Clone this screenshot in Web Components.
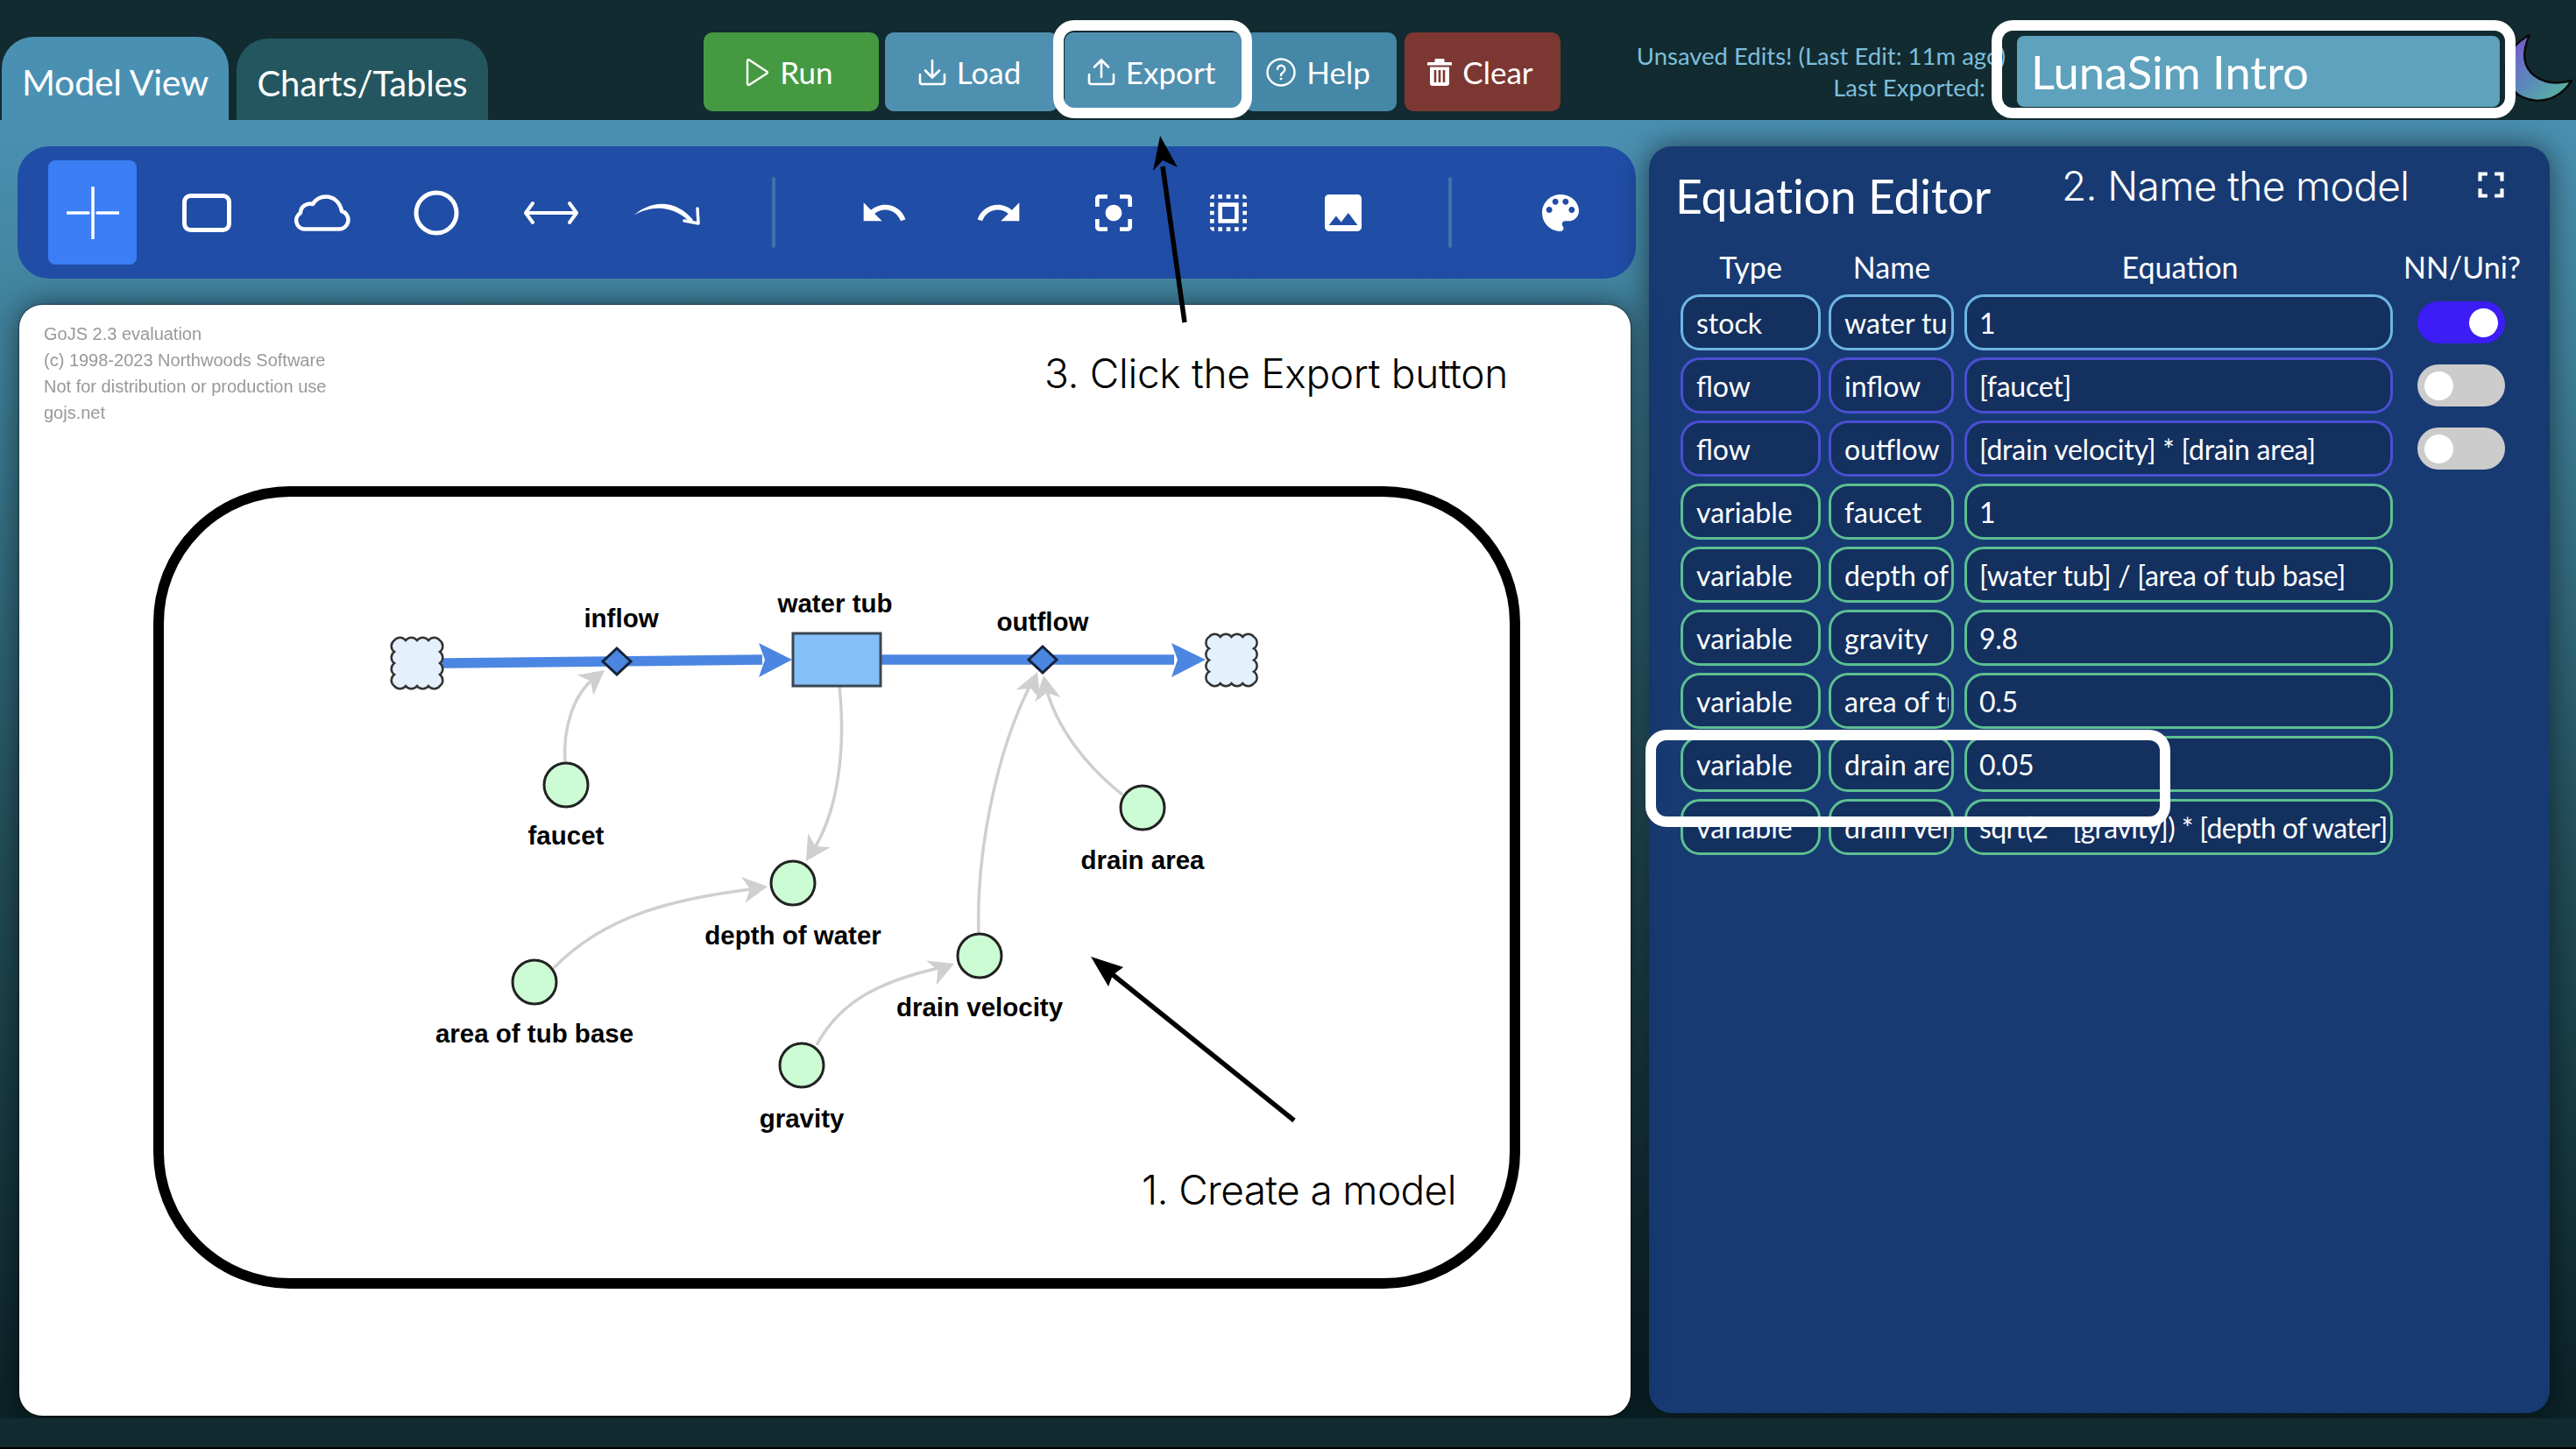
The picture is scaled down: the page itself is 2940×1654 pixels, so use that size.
<!DOCTYPE html>
<html lang="en">
<head>
<meta charset="utf-8">
<title>LunaSim</title>
<style>
  html, body { margin: 0; padding: 0; background: #122b30; }
  body { font-family: Lato, "Noto Sans", sans-serif; color: #fff; }
</style>
</head>
<body>
<luna-app>
  <luna-header>
    <luna-tab active style="--w:259px;--fs:41px;--top:42px;--ls:-.2px">Model View</luna-tab>
    <luna-tab style="--w:287px;--fs:40px;--top:44px;--ls:-.2px;margin-left:9px">Charts/Tables</luna-tab>
    <luna-btn style="--w:200px;--bg:#459a41;margin-left:246px" icon="play">Run</luna-btn>
    <luna-btn style="--w:198px;--bg:#4f90b0;margin-left:7px" icon="load">Load</luna-btn>
    <luna-btn style="--w:203px;--bg:#4f90b0;margin-left:7px" icon="export">Export</luna-btn>
    <luna-btn style="--w:174px;--bg:#4487a6;margin-left:2px" icon="help">Help</luna-btn>
    <luna-btn style="--w:178px;--bg:#7d3732;margin-left:9px" icon="trash">Clear</luna-btn>
    <luna-status></luna-status>
    <luna-name>LunaSim Intro</luna-name>
    <luna-moon></luna-moon>
  </luna-header>
  <luna-main>
    <luna-left>
      <luna-toolbar>
        <tool-btn active icon="plus"></tool-btn>
        <tool-btn icon="rect"></tool-btn>
        <tool-btn icon="cloud"></tool-btn>
        <tool-btn icon="circle"></tool-btn>
        <tool-btn icon="dbl"></tool-btn>
        <tool-btn icon="curve"></tool-btn>
        <tool-sep></tool-sep>
        <tool-btn icon="undo"></tool-btn>
        <tool-btn icon="redo"></tool-btn>
        <tool-btn icon="focus"></tool-btn>
        <tool-btn icon="select"></tool-btn>
        <tool-btn icon="photo"></tool-btn>
        <tool-sep></tool-sep>
        <tool-btn icon="palette"></tool-btn>
      </luna-toolbar>
      <luna-canvas></luna-canvas>
    </luna-left>
    <eq-editor>
      <eq-row type="stock" name="water tub" eq="1" tone="#6db6e4" toggle="on"></eq-row>
      <eq-row type="flow" name="inflow" eq="[faucet]" tone="#4a4fd2" toggle="off"></eq-row>
      <eq-row type="flow" name="outflow" eq="[drain velocity] * [drain area]" tone="#4a4fd2" toggle="off"></eq-row>
      <eq-row type="variable" name="faucet" eq="1" tone="#5cc091"></eq-row>
      <eq-row type="variable" name="depth of water" eq="[water tub] / [area of tub base]" tone="#5cc091"></eq-row>
      <eq-row type="variable" name="gravity" eq="9.8" tone="#5cc091"></eq-row>
      <eq-row type="variable" name="area of tub base" eq="0.5" tone="#5cc091"></eq-row>
      <eq-row type="variable" name="drain area" eq="0.05" tone="#5cc091"></eq-row>
      <eq-row type="variable" name="drain velocity" eq="sqrt(2 * [gravity]) * [depth of water]" tone="#5cc091" style="--eqls:-.62px"></eq-row>
    </eq-editor>
  </luna-main>
  <luna-foot></luna-foot>
  <note-box style="left:1202px;top:23px;width:227px;height:112px"></note-box>
  <note-box style="left:2273px;top:23px;width:598px;height:112px"></note-box>
  <note-box style="left:1878px;top:833px;width:599px;height:111px"></note-box>
  <note-arrows></note-arrows>
  <note-text style="left:1192px;top:396px;--ls:-.3px">3. Click the Export button</note-text>
  <note-text style="left:2353px;top:182px;--ls:-.62px;--c:#fff">2. Name the model</note-text>
  <note-text style="left:1303px;top:1328px;--ls:-.62px">1. Create a model</note-text>
</luna-app>

<script>
const def = (name, css, html, init) => {
  customElements.define(name, class extends HTMLElement {
    connectedCallback() {
      if (this.shadowRoot) return;
      const r = this.attachShadow({ mode: 'open' });
      r.innerHTML = `<style>${css}</style>` + (typeof html === 'function' ? html(this) : html);
      if (init) init(this, r);
    }
  });
};

const MAT = {
  undo: 'M12.5 8c-2.65 0-5.05.99-6.9 2.6L2 7v9h9l-3.62-3.62c1.39-1.16 3.16-1.88 5.12-1.88 3.54 0 6.55 2.31 7.6 5.5l2.37-.78C21.08 11.03 17.15 8 12.5 8z',
  redo: 'M18.4 10.6C16.55 8.99 14.15 8 11.5 8c-4.65 0-8.58 3.03-9.96 7.22L3.9 16c1.05-3.19 4.05-5.5 7.6-5.5 1.95 0 3.73.72 5.12 1.88L13 16h9V7l-3.6 3.6z',
  focus: 'M12 8c-2.21 0-4 1.79-4 4s1.79 4 4 4 4-1.79 4-4-1.79-4-4-4zm-7 7H3v4c0 1.1.9 2 2 2h4v-2H5v-4zM5 5h4V3H5c-1.1 0-2 .9-2 2v4h2V5zm14-2h-4v2h4v4h2V5c0-1.1-.9-2-2-2zm0 16h-4v2h4c1.1 0 2-.9 2-2v-4h-2v4z',
  select: 'M3 5h2V3c-1.1 0-2 .9-2 2zm0 8h2v-2H3v2zm4 8h2v-2H7v2zM3 9h2V7H3v2zm10-6h-2v2h2V3zm6 0v2h2c0-1.1-.9-2-2-2zM5 21v-2H3c0 1.1.9 2 2 2zm-2-4h2v-2H3v2zM9 3H7v2h2V3zm2 18h2v-2h-2v2zm8-8h2v-2h-2v2zm0 8c1.1 0 2-.9 2-2h-2v2zm0-12h2V7h-2v2zm0 8h2v-2h-2v2zm-4 4h2v-2h-2v2zm0-16h2V3h-2v2zM7 17h10V7H7v10zm2-8h6v6H9V9z',
  photo: 'M21 19V5c0-1.1-.9-2-2-2H5c-1.1 0-2 .9-2 2v14c0 1.1.9 2 2 2h14c1.1 0 2-.9 2-2zM8.5 13.5l2.5 3.01L14.5 12l4.5 6H5l3.5-4.5z',
  palette: 'M12 3c-4.97 0-9 4.03-9 9s4.03 9 9 9c.83 0 1.5-.67 1.5-1.5 0-.39-.15-.74-.39-1.01-.23-.26-.38-.61-.38-.99 0-.83.67-1.5 1.5-1.5H16c2.76 0 5-2.24 5-5 0-4.42-4.03-8-9-8zm-5.5 9c-.83 0-1.5-.67-1.5-1.5S5.67 9 6.5 9 8 9.67 8 10.5 7.33 12 6.5 12zm3-4C8.67 8 8 7.33 8 6.5S8.67 5 9.5 5s1.5.67 1.5 1.5S10.33 8 9.5 8zm5 0c-.83 0-1.5-.67-1.5-1.5S13.67 5 14.5 5s1.5.67 1.5 1.5S15.33 8 14.5 8zm3 4c-.83 0-1.5-.67-1.5-1.5S16.67 9 17.5 9s1.5.67 1.5 1.5-.67 1.5-1.5 1.5z',
  full: 'M7 14H5v5h5v-2H7v-3zm-2-4h2V7h3V5H5v5zm12 7h-3v2h5v-5h-2v3zM14 5v2h3v3h2V5h-5z'
};
const mat = (k, s = 56) => `<svg width="${s}" height="${s}" viewBox="0 0 24 24" fill="#fff"><path d="${MAT[k]}"/></svg>`;

const TOP_ICONS = {
  play: `<svg width="28" height="33" viewBox="0 0 28 33" fill="none" stroke="#fff" stroke-width="2.4" stroke-linejoin="round"><path d="M3 4c0-2 1.2-2.4 2.6-1.3L25 15.5c1.2.9 1.2 1.6 0 2.5L5.6 30.6C4.2 31.6 3 31 3 29z"/></svg>`,
  load: `<svg width="32" height="31" viewBox="0 0 32 31" fill="none" stroke="#fff" stroke-width="2.6" stroke-linecap="round" stroke-linejoin="round"><path d="M16 2v19M8 13.500l8 8 8-8M2 18v8.500c0 1.500 1 2.500 2.500 2.500h23c1.500 0 2.500-1 2.500-2.500V18"/></svg>`,
  export: `<svg width="32" height="31" viewBox="0 0 32 31" fill="none" stroke="#fff" stroke-width="2.6" stroke-linecap="round" stroke-linejoin="round"><path d="M16 21V2M8 9.500l8-8 8 8M2 18v8.500c0 1.500 1 2.500 2.500 2.500h23c1.500 0 2.500-1 2.500-2.500V18"/></svg>`,
  help: `<svg width="34" height="33" viewBox="0 0 34 33" fill="none" stroke="#fff" stroke-width="2.4" stroke-linecap="round"><ellipse cx="17" cy="16.500" rx="15.500" ry="15"/><path d="M13 13a4.200 4.200 0 1 1 6.500 3.500c-1.600 1-2.500 1.800-2.500 3.500"/><circle cx="17" cy="24" r="1" fill="#fff" stroke-width="1"/></svg>`,
  trash: `<svg width="28" height="32" viewBox="0 0 28 32" fill="#fff"><path d="M10 1h8c1 0 1.500.5 1.500 1.500V5H27c.6 0 1 .4 1 1v2.500H0V6c0-.6.4-1 1-1h7.500V2.500C8.500 1.500 9 1 10 1zM3 10.500h22V29c0 2-1 3-3 3H6c-2 0-3-1-3-3z"/><path d="M9 14v14M14 14v14M19 14v14" stroke="#7d3732" stroke-width="2.600"/></svg>`
};
const TOOL_ICONS = {
  plus: `<svg width="60" height="60" viewBox="0 0 60 60" stroke="#fff" stroke-width="3.500" stroke-linecap="round"><path d="M0 30H25M35 30H60M30 0V60"/></svg>`,
  rect: `<svg width="56" height="44" viewBox="0 0 56 44" fill="none" stroke="#fff" stroke-width="5" style="margin-left:-2px"><rect x="2.500" y="2.500" width="51" height="39" rx="7"/></svg>`,
  cloud: `<svg width="66" height="42" viewBox="0 0 66 42" fill="none" stroke="#fff" stroke-width="4.500" stroke-linejoin="round" style="margin-left:-2px"><path d="M13 39.500H52A10.500 10.500 0 0 0 56 19C54 8 46 2.500 38 2.500C31 2.500 26 6 23 11C16 9 9 14 9 21A10 10 0 0 0 13 39.500Z"/></svg>`,
  circle: `<svg width="52" height="52" viewBox="0 0 52 52" fill="none" stroke="#fff" stroke-width="5" style="margin-left:-2px"><circle cx="26" cy="26" r="23"/></svg>`,
  dbl: `<svg width="64" height="28" viewBox="0 0 64 28" fill="none" stroke="#fff" stroke-width="4" stroke-linecap="round" stroke-linejoin="round" style="margin-left:-2px"><path d="M4 14H60M11 3L3 14l8 11M53 3l8 11-8 11"/></svg>`,
  curve: `<svg width="76" height="30" viewBox="0 0 76 30" fill="#fff" stroke-linecap="round" stroke-linejoin="round"><path d="M0 18C18 2 46-3 68 23L65 26C46 6 20 6 0 18Z"/><path d="M73 10l1 17-16-3" fill="none" stroke="#fff" stroke-width="3.500"/></svg>`
};

def('luna-app', ':host{display:flex;flex-direction:column;position:relative;width:2940px;height:1654px;overflow:hidden}', '<slot></slot>');
def('luna-header', ':host{display:flex;align-items:flex-start;height:137px;padding-left:2px;box-sizing:border-box;background:#122b30}', '<slot></slot>');
def('luna-tab', `:host{display:flex;align-items:center;justify-content:center;box-sizing:border-box;width:var(--w);height:calc(137px - var(--top));margin-top:var(--top);
  padding-top:8px;border-radius:36px 36px 0 0;background:#245660;font-size:var(--fs);letter-spacing:var(--ls);white-space:nowrap}
  :host([active]){background:#4a90b2}`, '<slot></slot>');
def('luna-btn', `:host{display:flex;align-items:center;justify-content:center;gap:12px;box-sizing:border-box;width:var(--w);height:90px;margin-top:37px;padding-right:5px;border-radius:10px;background:var(--bg);font-size:35px;white-space:nowrap}
  svg{display:block;flex:none}`, el => TOP_ICONS[el.getAttribute('icon')] + '<slot></slot>');
def('luna-status', `:host{display:flex;flex-direction:column;align-items:flex-end;box-sizing:border-box;width:425px;margin-left:60px;margin-top:46px;color:#7dbedd;font-size:27.500px;line-height:36px;white-space:nowrap}
  .a{margin-right:-23px}`, '<div class="a">Unsaved Edits! (Last Edit: 11m ago)</div><div>Last Exported:</div>');
def('luna-name', `:host{display:flex;align-items:center;box-sizing:border-box;width:551px;height:81px;margin-left:36px;margin-top:41px;padding:0 0 0 16px;border-radius:8px;background:#5ea2bd;font-size:52.500px;white-space:nowrap}`, '<slot></slot>');
def('luna-moon', `:host{display:block;margin-left:3px;margin-top:30px;width:84px;height:95px}svg{display:block}`,
  `<svg width="84" height="95" viewBox="2856 30 84 95"><defs><linearGradient id="m" x1="0" y1="0" x2="1" y2="1"><stop offset="0" stop-color="#7a4fd4"/><stop offset=".55" stop-color="#5a8cb8"/><stop offset="1" stop-color="#55c09a"/></linearGradient></defs>
  <path d="M2887 40C2878 60 2880 76 2892 86C2905 96 2920 96 2935 92C2925 108 2910 115 2895 115C2872 113 2858 98 2860 75C2862 60 2872 48 2887 40Z" fill="url(#m)" stroke="#0a0a0a" stroke-width="2.500" stroke-linejoin="round"/></svg>`);

def('luna-main', `:host{display:flex;gap:15px;box-sizing:border-box;height:1482px;padding:30px 30px 3px 20px;background:linear-gradient(180deg,#4a90b2 0%,#3f8099 18%,#24505c 55%,#0b2227 100%);overflow:hidden}`, '<slot></slot>');
def('luna-left', ':host{display:flex;flex-direction:column;gap:30px;width:1847px;flex:none}', '<slot></slot>');
def('luna-toolbar', `:host{display:flex;align-items:center;box-sizing:border-box;height:151px;padding-left:35px;gap:30px;border-radius:36px;background:#204da6;flex:none}`, '<slot></slot>');
def('tool-btn', `:host{display:flex;align-items:center;justify-content:center;width:101px;height:119px;border-radius:8px;flex:none}
  :host([active]){background:#3b7ef5}svg{display:block}`, el => { const k = el.getAttribute('icon'); return MAT[k] ? mat(k) : TOOL_ICONS[k]; });
def('tool-sep', ':host{display:block;width:4px;height:81px;background:#3a74ae;border-radius:2px;flex:none;margin:0 43px 0 40px}', '');

def('luna-canvas', `:host{display:block;position:relative;flex:1;margin:0 6px 0 2px;background:#fff;border-radius:26px;box-shadow:0 0 2px #000,0 0 34px rgba(0,0,0,.55)}
  .w{padding:18px 0 0 28px;color:#989898;font:20px/30px "Liberation Sans",Arial,sans-serif;filter:blur(.6px)}
  .w div{white-space:nowrap}
  svg{position:absolute;left:0;top:0;display:block}
  text{font:700 29.500px "Liberation Sans",Arial,sans-serif;fill:#000;text-anchor:middle;dominant-baseline:central}`,
  () => `<div class="w"><div>GoJS 2.3 evaluation</div><div>(c) 1998-2023 Northwoods Software</div><div>Not for distribution or production use</div><div>gojs.net</div></div>` + diagram());

function cloud(x, y, w, h) {
  const n = 4, bw = w / n, bh = h / n, r = Math.min(bw, bh) * .62;
  let d = `M${x} ${y}`;
  for (let i = 0; i < n; i++) d += `A${r} ${r} 0 0 1 ${x + bw * (i + 1)} ${y}`;
  for (let i = 0; i < n; i++) d += `A${r} ${r} 0 0 1 ${x + w} ${y + bh * (i + 1)}`;
  for (let i = 0; i < n; i++) d += `A${r} ${r} 0 0 1 ${x + w - bw * (i + 1)} ${y + h}`;
  for (let i = 0; i < n; i++) d += `A${r} ${r} 0 0 1 ${x} ${y + h - bh * (i + 1)}`;
  return `<path d="${d}Z" fill="#e4f1fd" stroke="#333" stroke-width="2.500"/>`;
}
function head(tx, ty, deg, len = 28, wid = 15, col = '#cfcfcf') {
  const a = deg * Math.PI / 180, c = Math.cos(a), s = Math.sin(a);
  const p = (l, o) => `${(tx - l * c - o * s).toFixed(1)},${(ty - l * s + o * c).toFixed(1)}`;
  return `<polygon points="${tx},${ty} ${p(len, wid)} ${p(len * .72, 0)} ${p(len, -wid)}" fill="${col}"/>`;
}
function diagram() {
  const arcs = [
    ['M645 871C642 830 655 790 682 771', 690, 765, -38],
    ['M958 783C966 860 955 930 926 974', 920, 983, 122],
    ['M632 1105C690 1045 770 1025 866 1014', 876, 1012, -8],
    ['M932 1193C960 1140 1010 1118 1080 1103', 1089, 1100, -22],
    ['M1117 1066C1114 980 1135 860 1178 778', 1184, 767, -68],
    ['M1281 907C1240 875 1205 830 1193 782', 1191, 771, -100]
  ].map(([d, x, y, a]) => `<path d="${d}" fill="none" stroke="#cfcfcf" stroke-width="3.500"/>` + head(x, y, a)).join('');
  const nodes = [[646, 896, 'faucet', 953], [905, 1008, 'depth of water', 1067], [1304, 922, 'drain area', 981], [610, 1121, 'area of tub base', 1179], [1118, 1091, 'drain velocity', 1149], [915, 1216, 'gravity', 1276]]
    .map(([x, y, t, ly]) => `<circle cx="${x}" cy="${y}" r="25" fill="#ccfcd4" stroke="#222" stroke-width="3"/><text x="${x}" y="${ly}">${t}</text>`).join('');
  return `<svg width="1839" height="1268" viewBox="22 348 1839 1268">
    <rect x="181" y="561" width="1548" height="904" rx="150" fill="none" stroke="#000" stroke-width="12"/>
    <path d="M503 757L870 753M1005 753L1340 753" stroke="#4c86e3" stroke-width="11.500" fill="none"/>
    <polygon points="904,753 866,734 873,753 866,773" fill="#4c86e3"/>
    <polygon points="1376,753 1337,734 1344,753 1337,773" fill="#4c86e3"/>
    ${arcs}
    ${cloud(450, 731, 52, 52)}${cloud(1380, 727, 51, 53)}
    <rect x="905" y="723" width="100" height="60" fill="#85bff8" stroke="#3a4650" stroke-width="3"/>
    <polygon points="704,740 720,755 704,770 688,755" fill="#4a86e0" stroke="#152238" stroke-width="3"/>
    <polygon points="1190,738 1206,753 1190,768 1174,753" fill="#4a86e0" stroke="#152238" stroke-width="3"/>
    ${nodes}
    <text x="709" y="705">inflow</text><text x="953" y="688">water tub</text><text x="1190" y="709">outflow</text>
  </svg>`;
}

def('eq-editor', `:host{display:block;box-sizing:border-box;width:1028px;flex:none;height:1446px;padding:26px 0 0 36px;border-radius:26px;background:#183a72;box-shadow:0 0 34px rgba(0,0,0,.55)}
  .t{display:flex;justify-content:space-between;height:60px;margin-bottom:32px;margin-left:-6px}
  h2{margin:0;font-weight:400;font-size:53.500px;line-height:60px;letter-spacing:-.2px;white-space:nowrap}
  .f{margin:-7px 42px 0 0;width:50px;height:50px}svg{display:block}
  .h{display:grid;grid-template-columns:160px 162px 496px 148px;height:40px;margin-bottom:11px;font-size:34px;line-height:40px;text-align:center;white-space:nowrap}
  .r{display:flex;flex-direction:column;gap:8px}`,
  () => `<div class="t"><h2>Equation Editor</h2><div class="f">${mat('full', 50)}</div></div>
  <div class="h"><div>Type</div><div>Name</div><div>Equation</div><div>NN/Uni?</div></div><div class="r"><slot></slot></div>`);
def('eq-row', `:host{display:flex;height:64px;align-items:center}
  .p{box-sizing:border-box;height:64px;border:3px solid var(--t);border-radius:22px;background:#13305f;font-size:32px;line-height:58px;padding:1px 3px 0 15px;white-space:nowrap;flex:none}
  .p span{display:block;overflow:hidden}
  .a{width:160px}.b{width:143px;margin-left:9px}.c{width:489px;margin-left:12px;padding-left:14px;letter-spacing:var(--eqls,-.25px)}
  .g{box-sizing:border-box;width:100px;height:48px;margin-left:28px;border-radius:24px;background:#ccc;padding:7.500px 8px;display:flex;flex:none}
  .g i{display:block;width:33px;height:33px;border-radius:50%;background:#fff}
  .g.on{background:#3d1df5;justify-content:flex-end}`,
  el => {
    const g = el.getAttribute('toggle');
    el.style.setProperty('--t', el.getAttribute('tone'));
    return `<div class="p a"><span>${el.getAttribute('type')}</span></div><div class="p b"><span>${el.getAttribute('name')}</span></div><div class="p c"><span>${el.getAttribute('eq')}</span></div>` +
      (g ? `<div class="g ${g === 'on' ? 'on' : ''}"><i></i></div>` : '');
  });
def('luna-foot', ':host{display:block;height:33px;background:#122b30;border-bottom:2px solid #000;flex:none}', '');

def('note-box', ':host{display:block;position:absolute;box-sizing:border-box;border:12px solid #fff;border-radius:24px;pointer-events:none}', '');
def('note-text', `:host{display:block;position:absolute;font-family:Inter,"Liberation Sans",sans-serif;font-weight:300;font-size:46px;line-height:60px;letter-spacing:var(--ls);color:var(--c,#000);white-space:nowrap}`, '<slot></slot>');
def('note-arrows', ':host{display:block;position:absolute;left:0;top:0}svg{display:block}', `<svg width="2940" height="1654">
  <path d="M1352 368L1327 190" stroke="#000" stroke-width="5.500"/><polygon points="1324,155 1344,191 1327,183 1316,195"/>
  <path d="M1477 1279L1268 1111" stroke="#000" stroke-width="5.500"/><polygon points="1245,1092 1282,1104 1270,1113 1265,1126"/>
</svg>`);
</script>
</body>
</html>
